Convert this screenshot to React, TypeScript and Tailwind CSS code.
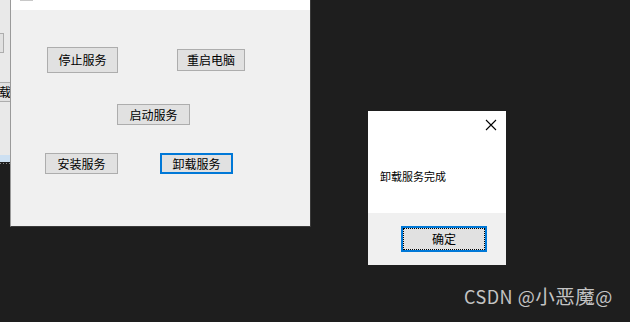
const cjk = "font-['Noto_Sans_CJK_SC','Microsoft_YaHei',sans-serif]";

function WinButton({
  label,
  className = "",
  focused = false,
}: {
  label: string;
  className?: string;
  focused?: boolean;
}) {
  return (
    <button
      className={`flex items-center justify-center bg-[#e1e1e1] text-[12px] leading-none text-black ${
        focused ? "border-2 border-[#0078d7]" : "border border-[#adadad]"
      } ${className}`}
    >
      {label}
    </button>
  );
}

function BackWindow() {
  return (
    <div className="absolute left-0 top-0 flex h-[162px] w-[11px] flex-col overflow-hidden bg-[#e9e9e9]">
      <div className="mt-[33px] h-[20px] w-[4px] border border-l-0 border-[#adadad] bg-[#e1e1e1]" />
      <div
        className={`mt-[29px] flex h-[20px] w-[60px] shrink-0 -ml-[30px] items-center justify-start border border-[#adadad] bg-[#e1e1e1] pl-[16px] text-[12px] leading-none whitespace-nowrap text-black ${cjk}`}
      >
        卸载服务
      </div>
      <div className="mt-auto h-[7px] w-full bg-[#cde0f2]" />
    </div>
  );
}

function MainWindow() {
  return (
    <div
      className={`absolute left-[10px] top-0 flex h-[227px] w-[301px] flex-col border-b border-l border-r border-b-[#3a3a3a] border-l-[#9a9a9a] border-r-[#3a3a3a] bg-[#f0f0f0] ${cjk}`}
    >
      <div className="relative h-[10px] w-full bg-white">
        <div className="absolute left-[9px] top-0 h-[1px] w-[13px] bg-[#c8c8c8]" />
      </div>
      <div className="flex flex-col">
        <div className="mt-[37px] flex items-start">
          <WinButton label="停止服务" className="ml-[36px] h-[26px] w-[71px]" />
          <WinButton label="重启电脑" className="ml-[59px] mt-[2px] h-[22px] w-[68px]" />
        </div>
        <div className="mt-[31px] flex">
          <WinButton label="启动服务" className="ml-[106px] h-[21px] w-[73px]" />
        </div>
        <div className="mt-[28px] flex">
          <WinButton label="安装服务" className="ml-[34px] h-[21px] w-[73px]" />
          <WinButton label="卸载服务" focused className="ml-[42px] h-[21px] w-[73px]" />
        </div>
      </div>
    </div>
  );
}

function MessageBox() {
  return (
    <div
      className={`absolute left-[368px] top-[111px] flex h-[154px] w-[138px] flex-col bg-white ${cjk}`}
    >
      <div className="flex h-[102px] flex-col">
        <div className="flex justify-end pr-[9px] pt-[8px]">
          <svg width="12" height="12" viewBox="0 0 12 12" className="text-black">
            <path d="M1 1 L11 11 M11 1 L1 11" stroke="currentColor" strokeWidth="1.1" />
          </svg>
        </div>
        <p className="ml-[12px] mt-[40px] text-[11px] leading-none text-black">卸载服务完成</p>
      </div>
      <div className="flex flex-1 bg-[#f0f0f0]">
        <button className="ml-[33px] mt-[13px] h-[26px] w-[86px] border-2 border-[#0078d7] bg-[#e1e1e1] p-0">
          <span className="flex h-full w-full items-center justify-center border border-dotted border-black text-[12px] leading-none text-black">
            确定
          </span>
        </button>
      </div>
    </div>
  );
}

export default function App() {
  return (
    <div className="relative h-[322px] w-[630px] overflow-hidden bg-[#1e1e1e]">
      <BackWindow />
      <div className="absolute left-0 top-[163px] h-[1px] w-[10px] bg-[repeating-linear-gradient(90deg,#8a8a8a_0_1px,transparent_1px_3px)]" />
      <MainWindow />
      <MessageBox />
      <div
        className={`absolute left-[464px] top-[286px] flex items-baseline text-[18px] leading-none tracking-[0.5px] text-[#c4c4c4] ${cjk}`}
      >
        <span>CSDN @</span>
        <span className="text-[19.5px]">小恶魔</span>
        <span>@</span>
      </div>
    </div>
  );
}
